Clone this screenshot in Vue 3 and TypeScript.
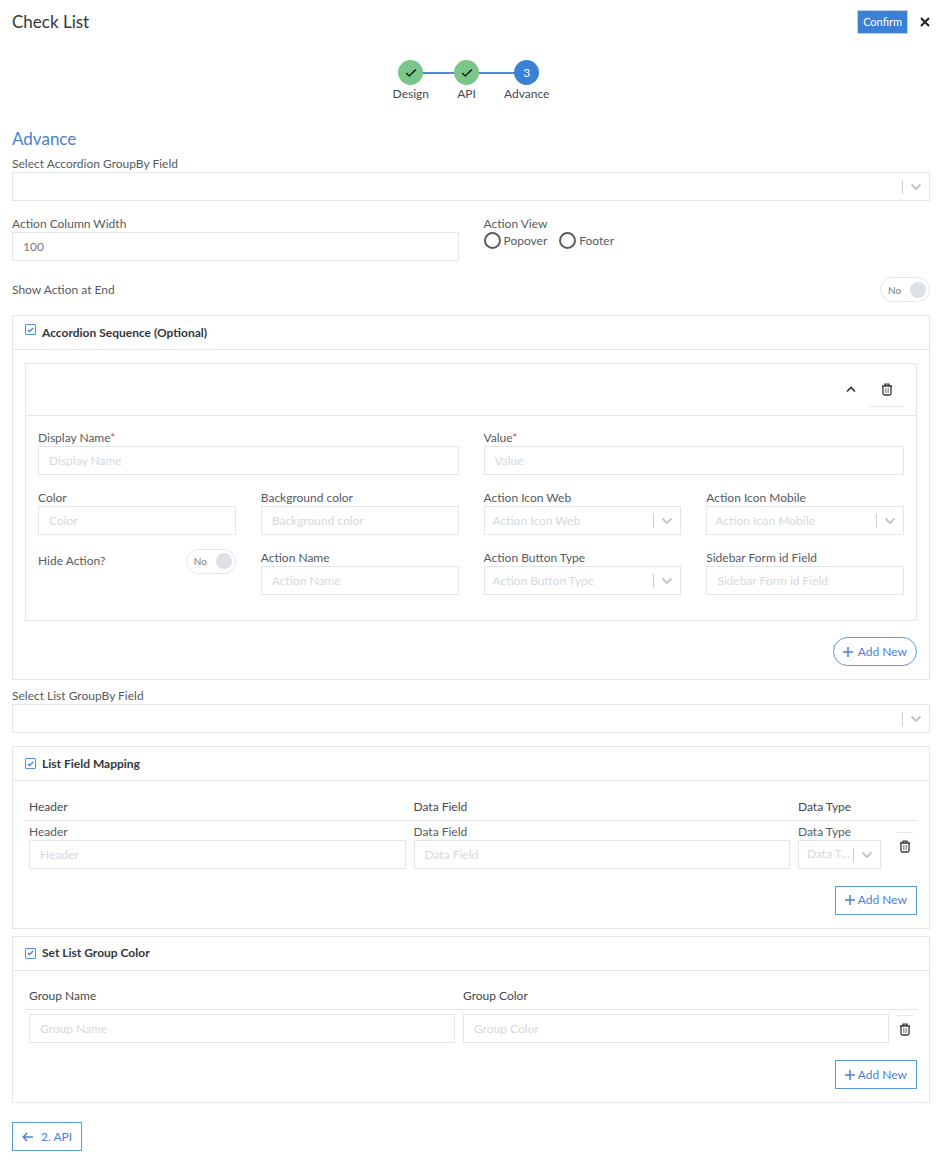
<script setup lang="ts">
import { reactive, ref } from 'vue'

interface Step { label: string; done: boolean }
interface Field { id: string; label: string; kind: 'text' | 'select' | 'toggle'; wide?: boolean; required?: boolean }

const steps: Step[] = [
  { label: 'Design', done: true },
  { label: 'API', done: true },
  { label: 'Advance', done: false },
]

const fields: Field[] = [
  { id: 'display-name', label: 'Display Name', kind: 'text', wide: true, required: true },
  { id: 'value', label: 'Value', kind: 'text', wide: true, required: true },
  { id: 'color', label: 'Color', kind: 'text' },
  { id: 'background-color', label: 'Background color', kind: 'text' },
  { id: 'icon-web', label: 'Action Icon Web', kind: 'select' },
  { id: 'icon-mobile', label: 'Action Icon Mobile', kind: 'select' },
  { id: 'hide-action', label: 'Hide Action?', kind: 'toggle' },
  { id: 'action-name', label: 'Action Name', kind: 'text' },
  { id: 'button-type', label: 'Action Button Type', kind: 'select' },
  { id: 'sidebar-form', label: 'Sidebar Form id Field', kind: 'text' },
]

const values = reactive<Record<string, string>>({})
const columnWidth = ref('100')
const actionView = ref('')
const showAtEnd = ref(false)
const hideAction = ref(false)
const sections = reactive({ accordion: true, mapping: true, colors: true })
</script>

<template>
  <main class="page">
    <header class="topbar">
      <h1>Check List</h1>
      <button type="button" class="confirm">Confirm</button>
      <button type="button" class="close" aria-label="Close">
        <svg width="10" height="10" viewBox="0 0 10 10"><path d="M1 1l8 8M9 1l-8 8" /></svg>
      </button>
    </header>

    <ol class="stepper">
      <li v-for="(step, i) in steps" :key="step.label" :class="{ done: step.done }">
        <span class="dot">
          <svg v-if="step.done" width="12" height="10" viewBox="0 0 12 10"><path d="M1.200 5l3 3L10.800 1.600" /></svg>
          <template v-else>{{ i + 1 }}</template>
        </span>
        <span class="step-label">{{ step.label }}</span>
      </li>
    </ol>

    <h2>Advance</h2>

    <div class="field">
      <label for="accordion-group">Select Accordion GroupBy Field</label>
      <div class="select">
        <select id="accordion-group"><option value=""></option></select>
        <svg class="chevron" width="12" height="8" viewBox="0 0 12 8"><path d="M1.500 1.500L6 6l4.500-4.500" /></svg>
      </div>
    </div>

    <div class="pair">
      <div class="field">
        <label for="column-width">Action Column Width</label>
        <input id="column-width" v-model="columnWidth" type="text" />
      </div>
      <fieldset class="view">
        <legend>Action View</legend>
        <div class="radios">
          <label><input v-model="actionView" type="radio" name="view" value="popover" />Popover</label>
          <label><input v-model="actionView" type="radio" name="view" value="footer" />Footer</label>
        </div>
      </fieldset>
    </div>

    <div class="toggle-row">
      <label for="show-at-end">Show Action at End</label>
      <span class="toggle">
        <span>{{ showAtEnd ? 'Yes' : 'No' }}</span>
        <input id="show-at-end" v-model="showAtEnd" type="checkbox" />
      </span>
    </div>

    <section class="card">
      <div class="card-head raised">
        <span class="tick">
          <input id="sec-accordion" v-model="sections.accordion" type="checkbox" />
          <svg v-if="sections.accordion" width="7" height="6" viewBox="0 0 7 6"><path d="M.8 2.900l1.800 1.700L6.200 1" /></svg>
        </span>
        <label for="sec-accordion">Accordion Sequence (Optional)</label>
      </div>
      <div class="card-body">
        <div class="item">
          <div class="item-head">
            <button type="button" class="fold" aria-label="Collapse">
              <svg width="10" height="7" viewBox="0 0 10 7"><path d="M1 5.500l4-4 4 4" /></svg>
            </button>
            <button type="button" class="trash under" aria-label="Delete">
              <svg width="12" height="13" viewBox="0 0 12 13"><path d="M1 3h10M4 3V1.200h4V3M2 3v7.500q0 1.500 1.500 1.500h5q1.500 0 1.500-1.500V3" /><path class="ribs" d="M4.500 5v5M6 5v5M7.500 5v5" /></svg>
            </button>
          </div>
          <div class="grid">
            <template v-for="f in fields" :key="f.id">
              <div v-if="f.kind === 'toggle'" class="toggle-row">
                <label :for="f.id">{{ f.label }}</label>
                <span class="toggle">
                  <span>{{ hideAction ? 'Yes' : 'No' }}</span>
                  <input :id="f.id" v-model="hideAction" type="checkbox" />
                </span>
              </div>
              <div v-else class="field" :class="{ wide: f.wide }">
                <label :for="f.id">{{ f.label }}<span v-if="f.required" class="req">*</span></label>
                <div v-if="f.kind === 'select'" class="select">
                  <select :id="f.id"><option value="">{{ f.label }}</option></select>
                  <svg class="chevron" width="12" height="8" viewBox="0 0 12 8"><path d="M1.500 1.500L6 6l4.500-4.500" /></svg>
                </div>
                <input v-else :id="f.id" v-model="values[f.id]" type="text" :placeholder="f.label" />
              </div>
            </template>
          </div>
        </div>
        <div class="actions">
          <button type="button" class="outline round">
            <svg width="10" height="10" viewBox="0 0 10 10"><path d="M5 0v10M0 5h10" /></svg>Add New
          </button>
        </div>
      </div>
    </section>

    <div class="field list-group">
      <label for="list-group">Select List GroupBy Field</label>
      <div class="select">
        <select id="list-group"><option value=""></option></select>
        <svg class="chevron" width="12" height="8" viewBox="0 0 12 8"><path d="M1.500 1.500L6 6l4.500-4.500" /></svg>
      </div>
    </div>

    <section class="card">
      <div class="card-head">
        <span class="tick">
          <input id="sec-mapping" v-model="sections.mapping" type="checkbox" />
          <svg v-if="sections.mapping" width="7" height="6" viewBox="0 0 7 6"><path d="M.8 2.900l1.800 1.700L6.200 1" /></svg>
        </span>
        <label for="sec-mapping">List Field Mapping</label>
      </div>
      <div class="card-body">
        <table>
          <colgroup><col /><col /><col class="type-col" /><col class="del-col" /></colgroup>
          <thead>
            <tr><th>Header</th><th>Data Field</th><th>Data Type</th><th></th></tr>
          </thead>
          <tbody>
            <tr>
              <td>
                <div class="field">
                  <label for="map-header">Header</label>
                  <input id="map-header" v-model="values.mapHeader" type="text" placeholder="Header" />
                </div>
              </td>
              <td>
                <div class="field">
                  <label for="map-field">Data Field</label>
                  <input id="map-field" v-model="values.mapField" type="text" placeholder="Data Field" />
                </div>
              </td>
              <td class="type-cell">
                <div class="field">
                  <label for="map-type">Data Type</label>
                  <div class="select">
                    <select id="map-type"><option value="">Data Type</option></select>
                    <svg class="chevron" width="12" height="8" viewBox="0 0 12 8"><path d="M1.500 1.500L6 6l4.500-4.500" /></svg>
                  </div>
                </div>
              </td>
              <td class="del-cell">
                <button type="button" class="trash over" aria-label="Delete mapping">
                  <svg width="12" height="13" viewBox="0 0 12 13"><path d="M1 3h10M4 3V1.200h4V3M2 3v7.500q0 1.500 1.500 1.500h5q1.500 0 1.500-1.500V3" /><path class="ribs" d="M4.500 5v5M6 5v5M7.500 5v5" /></svg>
                </button>
              </td>
            </tr>
          </tbody>
        </table>
        <div class="actions">
          <button type="button" class="outline">
            <svg width="10" height="10" viewBox="0 0 10 10"><path d="M5 0v10M0 5h10" /></svg>Add New
          </button>
        </div>
      </div>
    </section>

    <section class="card colors">
      <div class="card-head">
        <span class="tick">
          <input id="sec-colors" v-model="sections.colors" type="checkbox" />
          <svg v-if="sections.colors" width="7" height="6" viewBox="0 0 7 6"><path d="M.8 2.900l1.800 1.700L6.200 1" /></svg>
        </span>
        <label for="sec-colors">Set List Group Color</label>
      </div>
      <div class="card-body">
        <table>
          <colgroup><col /><col /><col class="del-col" /></colgroup>
          <thead>
            <tr><th>Group Name</th><th>Group Color</th><th></th></tr>
          </thead>
          <tbody>
            <tr>
              <td><input v-model="values.groupName" type="text" placeholder="Group Name" aria-label="Group Name" /></td>
              <td><input v-model="values.groupColor" type="text" placeholder="Group Color" aria-label="Group Color" /></td>
              <td class="del-cell">
                <button type="button" class="trash over" aria-label="Delete color">
                  <svg width="12" height="13" viewBox="0 0 12 13"><path d="M1 3h10M4 3V1.200h4V3M2 3v7.500q0 1.500 1.500 1.500h5q1.500 0 1.500-1.500V3" /><path class="ribs" d="M4.500 5v5M6 5v5M7.500 5v5" /></svg>
                </button>
              </td>
            </tr>
          </tbody>
        </table>
        <div class="actions">
          <button type="button" class="outline">
            <svg width="10" height="10" viewBox="0 0 10 10"><path d="M5 0v10M0 5h10" /></svg>Add New
          </button>
        </div>
      </div>
    </section>

    <button type="button" class="outline back">
      <svg width="11" height="10" viewBox="0 0 11 10"><path d="M11 5H1.500M5 1L1.200 5 5 9" /></svg>2. API
    </button>
  </main>
</template>

<style>
body {
  background: #fff;
}
</style>

<style scoped>
.page {
  padding: 10px 12px;
  font: 12px/16px Lato, sans-serif;
  color: #555b62;
}
* {
  box-sizing: border-box;
}
svg {
  fill: none;
  stroke: currentColor;
  flex: none;
}
button,
input,
select {
  font: inherit;
  margin: 0;
}
button {
  padding: 0;
  border: 0;
  background: none;
  display: flex;
  align-items: center;
  justify-content: center;
}
.topbar {
  display: flex;
  align-items: center;
  height: 24px;
}
h1,
h2 {
  margin: 0;
  font-size: 17px;
  font-weight: 400;
  line-height: 24px;
}
h1 {
  flex: 1;
  color: #33373c;
}
.confirm {
  height: 24px;
  padding: 0 5px;
  border: 1px solid #b9d4f3;
  background: #3a80d4;
  color: #fff;
  font-size: 11px;
}
.close {
  width: 10px;
  margin-left: 12px;
  color: #222;
}
.close svg {
  stroke-width: 2;
}
.stepper {
  display: flex;
  justify-content: center;
  margin: 26px 0 0;
  padding: 0;
  list-style: none;
}
.stepper li {
  position: relative;
  display: flex;
  flex-direction: column;
  align-items: center;
  gap: 1px;
}
.stepper li + li {
  margin-left: 25px;
}
.stepper li + li::before {
  content: '';
  position: absolute;
  top: 12px;
  right: 50%;
  width: 56px;
  height: 2px;
  background: #4a8bdc;
}
.dot {
  position: relative;
  z-index: 1;
  display: flex;
  align-items: center;
  justify-content: center;
  width: 25px;
  height: 25px;
  border-radius: 50%;
  background: #3a80d4;
  color: #fff;
}
.done .dot {
  background: #7ac588;
  color: #1c2a20;
}
.dot svg {
  stroke-width: 1.6;
}
.step-label {
  color: #44494f;
}
h2 {
  margin-top: 25px;
  margin-bottom: 5px;
  color: #4a80d8;
}
.field {
  display: flex;
  flex-direction: column;
  min-width: 0;
}
.field label {
  white-space: nowrap;
}
input[type='text'] {
  width: 100%;
  height: 29px;
  padding: 0 10px;
  border: 1px solid #e3e6ea;
  border-radius: 0;
  background: #fff;
  color: #7a7d82;
  outline: 0;
}
input::placeholder {
  color: #d5d9de;
  opacity: 1;
}
.select {
  position: relative;
}
select {
  display: block;
  width: 100%;
  height: 29px;
  padding: 0 30px 0 8px;
  border: 1px solid #e3e6ea;
  border-radius: 0;
  appearance: none;
  background: #fff;
  color: #d5d9de;
  text-overflow: ellipsis;
}
.select::after {
  content: '';
  position: absolute;
  right: 27px;
  top: 8px;
  width: 1px;
  height: 14px;
  background: #ccc;
}
.chevron {
  position: absolute;
  right: 8px;
  top: 11px;
  color: #c4c6c9;
  stroke-width: 2;
  pointer-events: none;
}
.pair {
  display: grid;
  grid-template-columns: 1fr 1fr;
  gap: 25px;
  margin-top: 15px;
}
.view {
  min-width: 0;
  margin: 0;
  padding: 0;
  border: 0;
}
.view legend {
  padding: 0;
}
.radios {
  display: flex;
  gap: 12px;
}
.radios label {
  display: flex;
  align-items: center;
  gap: 3px;
}
.radios input {
  appearance: none;
  width: 17px;
  height: 17px;
  border: 2px solid #5a5e64;
  border-radius: 50%;
}
.radios input:checked {
  background: #3a80d4;
}
.toggle-row {
  display: flex;
  align-items: center;
  justify-content: space-between;
  height: 25px;
}
.pair + .toggle-row {
  margin-top: 16px;
}
.toggle {
  display: flex;
  align-items: center;
  justify-content: space-between;
  width: 50px;
  height: 25px;
  padding: 0 3px 0 7px;
  border: 1px solid #e3e6ea;
  border-radius: 13px;
  color: #7a7d82;
  font-size: 10px;
}
.toggle input {
  appearance: none;
  width: 16px;
  height: 16px;
  border-radius: 50%;
  background: #dde1e6;
}
.card {
  margin-top: 13px;
  border: 1px solid #e3e6ea;
}
.card.colors {
  margin-top: 7px;
}
.card-head {
  display: flex;
  align-items: center;
  gap: 6px;
  height: 34px;
  padding: 0 12px;
  border-bottom: 1px solid #e3e6ea;
  color: #33373c;
  font-weight: 700;
}
.raised .tick {
  margin-bottom: 6px;
}
.tick {
  display: grid;
  place-items: center;
}
.tick input,
.tick svg {
  grid-area: 1 / 1;
}
.tick input {
  appearance: none;
  width: 11px;
  height: 11px;
  border: 1px solid #5b8be0;
  border-radius: 1px;
}
.tick svg {
  color: #4a80d8;
  stroke-width: 1.4;
  pointer-events: none;
}
.card-body {
  padding: 13px 12px;
}
.item {
  border: 1px solid #e3e6ea;
}
.item-head {
  display: flex;
  align-items: center;
  justify-content: flex-end;
  gap: 12px;
  height: 52px;
  padding: 0 12px;
  border-bottom: 1px solid #e3e6ea;
}
.fold {
  width: 12px;
  height: 24px;
  color: #33373c;
}
.fold svg {
  stroke-width: 1.7;
}
.trash {
  color: #33373c;
}
.trash svg {
  stroke-width: 1.3;
}
.trash .ribs {
  stroke-width: 1;
  stroke-opacity: 0.5;
}
.trash.under {
  width: 35px;
  height: 35px;
  border-bottom: 1px solid #e3e6ea;
}
.trash.over {
  width: 16px;
  height: 28px;
  border-top: 1px solid #e3e6ea;
}
.grid {
  display: grid;
  grid-template-columns: repeat(4, minmax(0, 1fr));
  gap: 15px 25px;
  padding: 14px 12px 25px;
}
.grid .toggle-row {
  height: 22px;
}
.wide {
  grid-column: span 2;
}
.req {
  color: #e04848;
}
.actions {
  display: flex;
  justify-content: flex-end;
  margin-top: 17px;
}
.item + .actions {
  margin-top: 16px;
}
.outline {
  gap: 3px;
  height: 29px;
  padding: 0 9px;
  border: 1px solid #5c98e0;
  color: #4a80d8;
}
.outline svg {
  stroke-width: 1.5;
}
.round {
  gap: 5px;
  border-radius: 15px;
}
.list-group {
  margin-top: 8px;
}
.back {
  gap: 8px;
  margin-top: 19px;
}
table {
  width: 100%;
  border-collapse: collapse;
  table-layout: fixed;
}
.type-col {
  width: 99px;
}
.del-col {
  width: 24px;
}
th {
  height: 26px;
  padding: 0 4px;
  border-bottom: 1px solid #e3e6ea;
  color: #44494f;
  font-weight: 400;
  text-align: left;
}
td {
  padding: 3px 4px 0;
  vertical-align: top;
}
.colors td {
  padding-top: 4px;
}
.type-cell {
  padding-right: 12px;
}
.del-cell {
  vertical-align: middle;
}
</style>
